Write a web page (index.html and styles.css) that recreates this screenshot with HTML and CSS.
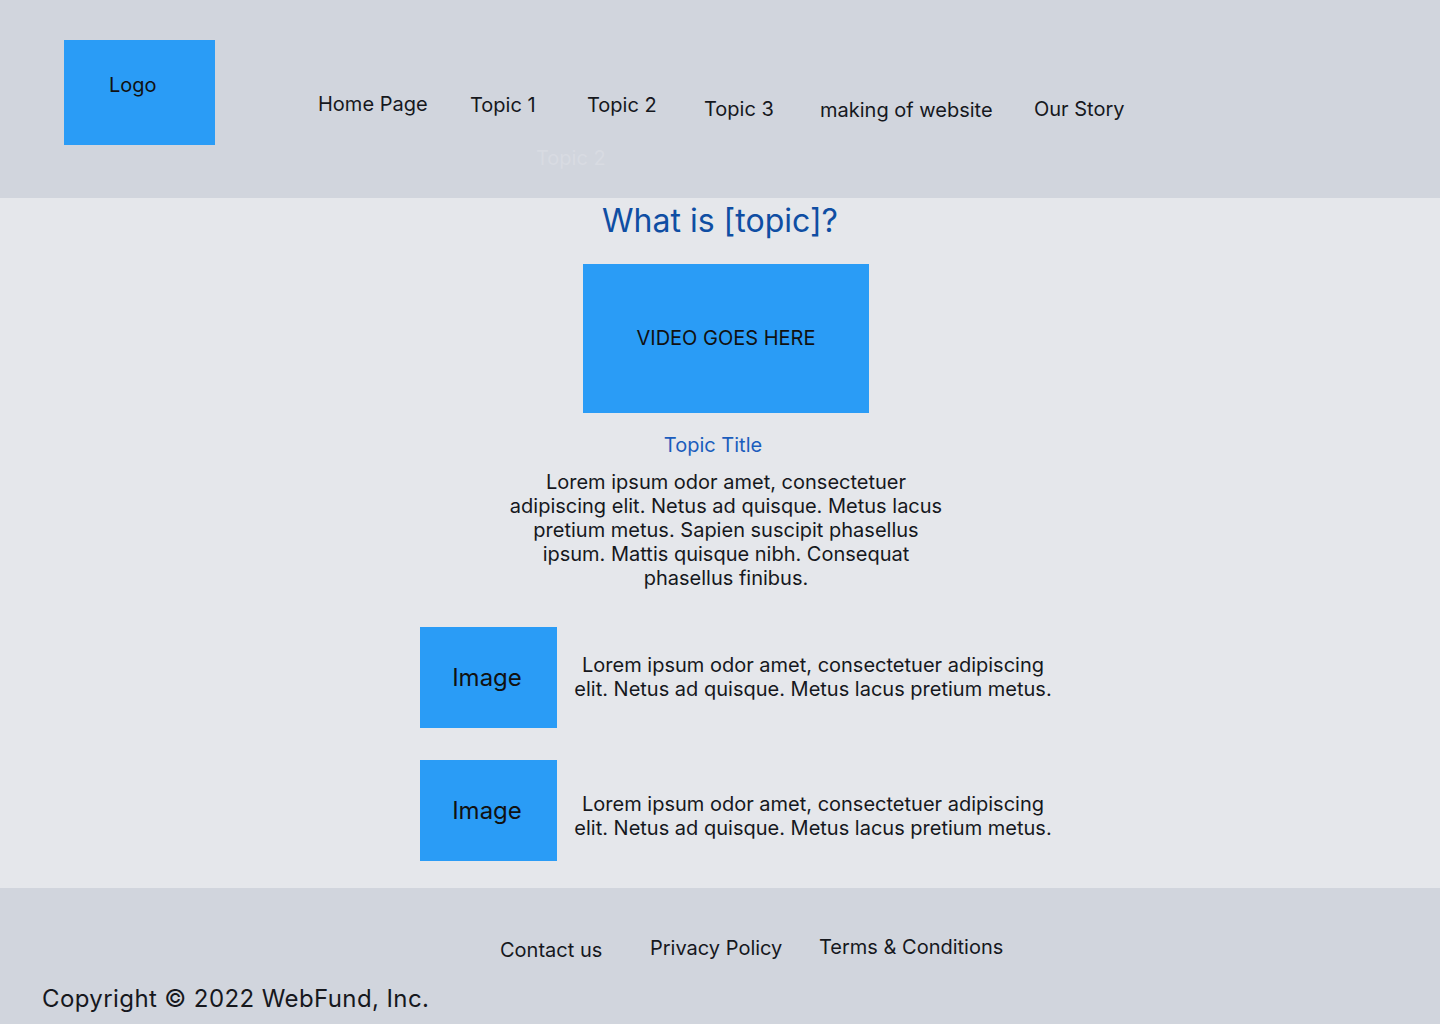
FILE: index.html
```html
<!DOCTYPE html>
<html lang="en">
<head>
<meta charset="utf-8">
<title>What is [topic]?</title>
<link rel="stylesheet" href="styles.css">
</head>
<body>
<header class="site-header">
  <div class="logo">Logo</div>
  <nav class="nav">
    <a class="nav-item nav-home" href="#">Home Page</a>
    <a class="nav-item nav-t1" href="#">Topic 1</a>
    <a class="nav-item nav-t2" href="#">Topic 2</a>
    <a class="nav-item nav-t3" href="#">Topic 3</a>
    <a class="nav-item nav-making" href="#">making of website</a>
    <a class="nav-item nav-story" href="#">Our Story</a>
  </nav>
  <div class="dropdown-ghost">Topic 2</div>
</header>

<main class="main">
  <h1 class="page-title">What is [topic]?</h1>
  <div class="video">VIDEO GOES HERE</div>
  <h2 class="topic-title">Topic Title</h2>
  <p class="intro">Lorem ipsum odor amet, consectetuer adipiscing elit. Netus ad quisque. Metus lacus pretium metus. Sapien suscipit phasellus ipsum. Mattis quisque nibh. Consequat phasellus finibus.</p>

  <div class="rows">
    <div class="row">
      <div class="image">Image</div>
      <p class="row-text">Lorem ipsum odor amet, consectetuer adipiscing elit. Netus ad quisque. Metus lacus pretium metus.</p>
    </div>
    <div class="row">
      <div class="image">Image</div>
      <p class="row-text row-text-low">Lorem ipsum odor amet, consectetuer adipiscing elit. Netus ad quisque. Metus lacus pretium metus.</p>
    </div>
  </div>
</main>

<footer class="site-footer">
  <div class="footer-links">
    <a class="footer-link fl-contact" href="#">Contact us</a>
    <a class="footer-link fl-privacy" href="#">Privacy Policy</a>
    <a class="footer-link fl-terms" href="#">Terms &amp; Conditions</a>
  </div>
  <div class="copyright">Copyright © 2022 WebFund, Inc.</div>
</footer>
</body>
</html>
```

FILE: styles.css
```css
* { box-sizing: border-box; }

html, body {
  margin: 0;
  padding: 0;
}

body {
  background: #e5e7eb;
  color: #16181d;
  font-family: Inter, "Noto Sans", "Liberation Sans", sans-serif;
  font-size: 20px;
  line-height: 24px;
}

a { color: inherit; text-decoration: none; }

/* Header */
.site-header {
  position: relative;
  display: flex;
  align-items: flex-start;
  height: 198px;
  background: #d1d5dd;
}

.logo {
  width: 151px;
  height: 105px;
  margin: 40px 0 0 64px;
  padding: 33px 0 0 45px;
  background: #2a9cf6;
  color: #111;
}

.nav {
  display: grid;
  grid-template-columns: 152px 117px 117px 116px 214px auto;
  align-items: start;
  margin-left: 103px;
}

.nav-item { white-space: nowrap; }
.nav-home { margin-top: 92px; }
.nav-t1 { margin-top: 93px; }
.nav-t2 { margin-top: 93px; }
.nav-t3 { margin-top: 97px; }
.nav-making { margin-top: 98px; }
.nav-story { margin-top: 97px; }

.dropdown-ghost {
  position: absolute;
  left: 536px;
  top: 146px;
  color: #d8dbe2;
}

/* Main */
.main {
  display: flex;
  flex-direction: column;
  align-items: center;
  padding: 3px 0 27px;
}

.page-title {
  margin: 0;
  font-size: 32px;
  line-height: 40px;
  font-weight: 400;
  color: #0f4ea3;
}

.video {
  display: flex;
  align-items: center;
  justify-content: center;
  width: 286px;
  height: 149px;
  margin: 23px 0 0 12px;
  padding-bottom: 2px;
  background: #2a9cf6;
  color: #111;
}

.topic-title {
  margin: 20px 14px 0 0;
  font-size: 20px;
  line-height: 24px;
  font-weight: 400;
  color: #1b5dbd;
}

.intro {
  width: 440px;
  margin: 13px 0 0 12px;
  text-align: center;
}

.rows {
  display: flex;
  flex-direction: column;
  gap: 32px;
  margin: 37px 0 0 38px;
}

.row {
  display: flex;
  align-items: center;
}

.image {
  display: flex;
  align-items: center;
  justify-content: center;
  width: 137px;
  height: 101px;
  flex: none;
  padding-right: 3px;
  background: #2a9cf6;
  color: #111;
  font-size: 24px;
  line-height: 29px;
}

.row-text {
  width: 490px;
  margin: 0 0 1px 11px;
  text-align: center;
}

.row-text-low { margin-top: 12px; }

/* Footer */
.site-footer {
  height: 136px;
  padding-top: 47px;
  background: #d1d5dd;
}

.footer-links {
  display: grid;
  grid-template-columns: 150px 169px auto;
  align-items: start;
  margin-left: 500px;
}

.footer-link { white-space: nowrap; }
.fl-contact { margin-top: 3px; }
.fl-privacy { margin-top: 1px; }
.fl-terms { margin-top: 0; }

.copyright {
  margin: 22px 0 0 42px;
  font-size: 24px;
  line-height: 29px;
  letter-spacing: 0.4px;
}
```
